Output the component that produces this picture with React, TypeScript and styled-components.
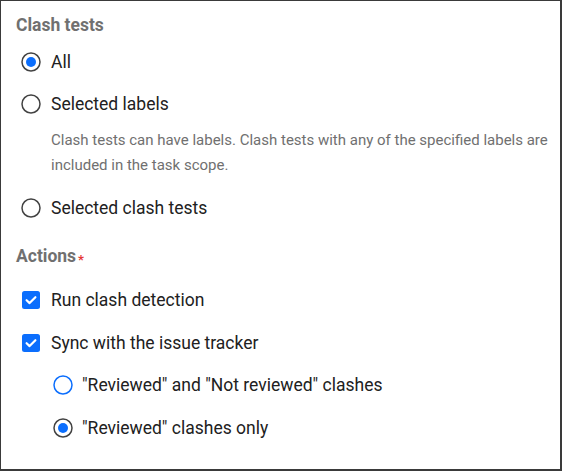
import React from 'react';
import styled, { createGlobalStyle } from 'styled-components';

const palette = {
  frame: '#3a3a3a',
  text: '#212121',
  muted: '#707070',
  blue: '#0b6efd',
  ring: '#424242',
  red: '#e53935',
};

const GlobalStyle = createGlobalStyle`
  html, body {
    margin: 0;
    padding: 0;
    background: #ffffff;
  }
  body {
    font-family: Roboto, "Liberation Sans", Arial, sans-serif;
    -webkit-font-smoothing: antialiased;
  }
`;

interface RadioProps {
  checked?: boolean;
  focused?: boolean;
}
const Radio: React.FC<RadioProps> = ({ checked, focused }) => (
  <RadioIcon width="20" height="20" viewBox="0 0 20 20">
    <circle
      cx="10"
      cy="10"
      r="9"
      fill="#fff"
      stroke={focused ? palette.blue : palette.ring}
      strokeWidth="1.5"
    />
    {checked && <circle cx="10" cy="10" r="5" fill={palette.blue} />}
  </RadioIcon>
);

const Checkbox: React.FC = () => (
  <CheckIcon width="18" height="18" viewBox="0 0 18 18">
    <rect x="0" y="0" width="18" height="18" rx="2.5" fill={palette.blue} />
    <path
      d="M4.6 9.2 L7.6 12.1 L13.4 6.2"
      fill="none"
      stroke="#fff"
      strokeWidth="2.2"
      strokeLinecap="round"
      strokeLinejoin="round"
    />
  </CheckIcon>
);

const App: React.FC = () => {
  return (
    <>
      <GlobalStyle />
      <Panel>
        <Heading>Clash tests</Heading>
        <Options $gap={0}>
          <Row $indent={0}>
            <Radio checked />
            <Label>All</Label>
          </Row>
          <Row $indent={0}>
            <Radio />
            <Label>Selected labels</Label>
          </Row>
          <Description>
            Clash tests can have labels. Clash tests with any of the specified labels are
            included in the task scope.
          </Description>
          <Row $indent={0}>
            <Radio />
            <Label>Selected clash tests</Label>
          </Row>
        </Options>

        <Heading $spaced>
          Actions<Required>*</Required>
        </Heading>
        <Options $gap={0.5} $top={11}>
          <Row $indent={0}>
            <Checkbox />
            <Label>Run clash detection</Label>
          </Row>
          <Row $indent={0}>
            <Checkbox />
            <Label>Sync with the issue tracker</Label>
          </Row>
          <Row $indent={32}>
            <Radio focused />
            <Label $tight>"Reviewed" and "Not reviewed" clashes</Label>
          </Row>
          <Row $indent={32}>
            <Radio checked />
            <Label $tight>"Reviewed" clashes only</Label>
          </Row>
        </Options>
      </Panel>
    </>
  );
};

export default App;

const Panel = styled.div`
  box-sizing: border-box;
  width: 562px;
  height: 471px;
  border: 1px solid ${palette.frame};
  border-right-width: 2px;
  border-bottom-width: 2px;
  padding: 12px 10px 0 15px;
  overflow: hidden;
`;

const Heading = styled.div<{ $spaced?: boolean }>`
  font-size: 17.5px;
  line-height: 24px;
  font-weight: 700;
  color: ${palette.muted};
  margin-top: ${(p) => (p.$spaced ? '15px' : '0')};
  display: flex;
  align-items: flex-start;
`;

const Required = styled.span`
  color: ${palette.red};
  font-size: 13px;
  line-height: 13px;
  margin-left: 2px;
  margin-top: 9px;
`;

const Options = styled.div<{ $gap: number; $top?: number }>`
  display: flex;
  flex-direction: column;
  gap: ${(p) => p.$gap}px;
  margin-top: ${(p) => p.$top ?? 4}px;
`;

const Row = styled.div<{ $indent: number }>`
  display: flex;
  align-items: center;
  height: 42px;
  padding-left: ${(p) => p.$indent + 5}px;
`;

const RadioIcon = styled.svg`
  flex: none;
  display: block;
`;

const CheckIcon = styled.svg`
  flex: none;
  display: block;
  margin-left: 1px;
  margin-right: 1px;
`;

const Label = styled.span<{ $tight?: boolean }>`
  font-size: 17.5px;
  color: ${palette.text};
  margin-left: ${(p) => (p.$tight ? '9px' : '10px')};
  white-space: nowrap;
`;

const Description = styled.p`
  margin: 3px 0 9px 35px;
  width: 510px;
  font-size: 15px;
  line-height: 25px;
  color: ${palette.muted};
`;
